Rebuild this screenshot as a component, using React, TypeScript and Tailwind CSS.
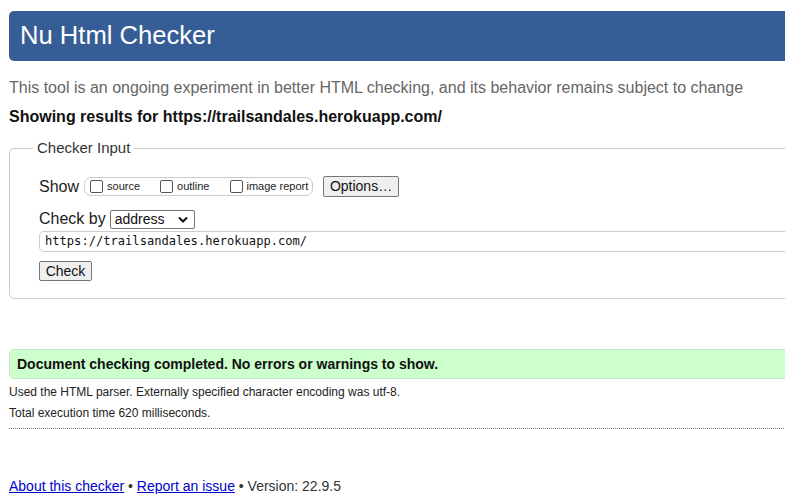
import React from "react";

export default function App() {
  return (
    <div className="w-[785px] h-[502px] overflow-hidden bg-white" style={{ fontFamily: '"Liberation Sans", Arial, sans-serif' }}>
      <div className="w-[840px] pl-[9px]">
        <div className="mt-[11px] h-[50px] rounded-[5px] bg-[#365d95] pl-[11px] flex items-center">
          <h1 className="text-[25.6px] leading-none text-white font-normal">Nu Html Checker</h1>
        </div>
        <p className="mt-[18px] text-[16px] leading-[18px] text-[#666]">
          This tool is an ongoing experiment in better HTML checking, and its behavior remains subject to change
        </p>
        <p className="mt-[11px] text-[16px] leading-[18px] font-bold text-[#111]">
          Showing results for https://trailsandales.herokuapp.com/
        </p>
        <fieldset className="mt-[13px] border border-[#ccc] rounded-[5px]">
          <legend className="ml-[23px] px-[4px] text-[15px] leading-[18px] text-[#333]">Checker Input</legend>
          <div className="pl-[29px] pb-[17px]">
            <div className="mt-[19px] flex items-center h-[21px]">
              <span className="text-[16px] text-[#222]">Show</span>
              <div className="ml-[5px] h-[19px] w-[229px] shrink-0 whitespace-nowrap border border-[#ccc] rounded-[7px] flex items-center pl-[5px]">
                <span className="shrink-0 w-[13px] h-[13px] border border-[#555] rounded-[2px] bg-white"></span>
                <span className="ml-[4px] text-[11px] text-[#222]">source</span>
                <span className="shrink-0 ml-[20px] w-[13px] h-[13px] border border-[#555] rounded-[2px] bg-white"></span>
                <span className="ml-[4px] text-[11px] text-[#222]">outline</span>
                <span className="shrink-0 ml-[21px] w-[13px] h-[13px] border border-[#555] rounded-[2px] bg-white"></span>
                <span className="ml-[3px] text-[11px] text-[#222]">image report</span>
              </div>
              <div className="ml-[10px] h-[21px] w-[76px] shrink-0 border border-[#767676] rounded-[2px] bg-[#efefef] flex items-center justify-center text-[14px] text-[#111]">
                Options…
              </div>
            </div>
            <div className="mt-[12px] flex items-center h-[20px]">
              <span className="text-[16px] text-[#222]">Check by</span>
              <div className="ml-[4px] h-[19px] w-[85px] border border-[#767676] rounded-[2px] bg-white flex items-center pl-[4px] pr-[4px] justify-between">
                <span className="text-[14px] text-[#111]">address</span>
                <svg width="10" height="7" viewBox="0 0 10 7" className="mr-[2px]">
                  <path d="M1 1.5 L5 5.5 L9 1.5" stroke="#111" strokeWidth="2" fill="none" />
                </svg>
              </div>
            </div>
            <div className="mt-[2px] h-[21px] border border-[#ccc] rounded-l-[5px] flex items-center pl-[5px]">
              <span className="text-[#111]" style={{ fontFamily: '"DejaVu Sans Mono", "Liberation Mono", monospace', fontSize: '12.1px' }}>
                https://trailsandales.herokuapp.com/
              </span>
            </div>
            <div className="mt-[9px] h-[20px] w-[53px] border border-[#767676] rounded-[2px] bg-[#efefef] flex items-center justify-center text-[14px] text-[#111]">
              Check
            </div>
          </div>
        </fieldset>
        <div className="mt-[50px] h-[30px] border border-[#c6e5c6] rounded-l-[5px] bg-[#ccffcc] flex items-center pl-[7px]">
          <span className="text-[14px] font-bold text-[#111]">Document checking completed. No errors or warnings to show.</span>
        </div>
        <p className="mt-[6px] text-[12px] leading-[14px] text-[#222]">Used the HTML parser. Externally specified character encoding was utf-8.</p>
        <p className="mt-[7px] text-[12px] leading-[14px] text-[#222]">Total execution time 620 milliseconds.</p>
        <div className="mt-[8px] border-b border-dotted border-[#777]"></div>
        <p className="mt-[49px] text-[14px] leading-[16px] text-[#333]">
          <a className="text-[#0000cc] underline">About this checker</a> • <a className="text-[#0000cc] underline">Report an issue</a> • Version: 22.9.5
        </p>
      </div>
    </div>
  );
}
